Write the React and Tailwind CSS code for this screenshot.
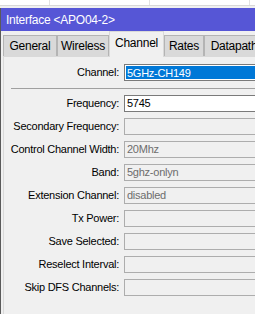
const font = { fontFamily: '"Liberation Sans", Arial, sans-serif' };

const tabs = [
  { name: 'General', w: 'w-[54px]' },
  { name: 'Wireless', w: 'w-[52px]' },
  { name: 'Channel', w: 'w-[55px]', active: true },
  { name: 'Rates', w: 'w-[40px]' },
  { name: 'Datapath', w: 'w-[60px]' },
];

const rows = [
  { label: 'Frequency:', value: '5745', enabled: true },
  { label: 'Secondary Frequency:' },
  { label: 'Control Channel Width:', value: '20Mhz' },
  { label: 'Band:', value: '5ghz-onlyn' },
  { label: 'Extension Channel:', value: 'disabled' },
  { label: 'Tx Power:' },
  { label: 'Save Selected:' },
  { label: 'Reselect Interval:' },
  { label: 'Skip DFS Channels:' },
];

function Row({ label, children }) {
  return (
    <div className="flex h-[17px] items-center">
      <div className="w-[115px] shrink-0 whitespace-nowrap text-right text-black">{label}</div>
      <div className="ml-[5px] h-[17px] w-[140px] shrink-0">{children}</div>
    </div>
  );
}

export default function App() {
  return (
    <div
      className="flex h-[314px] w-[255px] flex-col overflow-hidden bg-white text-[11px] tracking-[-0.25px]"
      style={font}
    >
      {/* table behind the window */}
      <div className="flex h-[6px] shrink-0 border-b border-[#d8d8d8] bg-white">
        <div className="w-[50px] shrink-0 border-r border-[#e2e2e2]" />
        <div className="w-[100px] shrink-0 border-r border-[#e2e2e2]" />
        <div className="w-[100px] shrink-0 border-r border-[#e2e2e2]" />
      </div>
      <div className="h-[2px] shrink-0 bg-[#f0f0f0]" />

      <div className="flex flex-1 flex-col border-l border-[#5a5a5a]">
        <div className="flex h-[23px] shrink-0 items-center bg-[#5656d6] pl-[5px] text-[12px] leading-none text-white">
          Interface &lt;APO04-2&gt;
        </div>

        <div className="flex flex-1 flex-col bg-[#f0f0f0] pl-[2px]">
          <div className="relative z-10 flex h-[25px] shrink-0 items-end">
            {tabs.map((t) =>
              t.active ? (
                <div
                  key={t.name}
                  className={`${t.w} -mb-px flex h-[26px] shrink-0 items-center justify-center border-x border-t border-[#d9d9d9] bg-[#f0f0f0] pb-[3px] text-[12px] text-black`}
                >
                  {t.name}
                </div>
              ) : (
                <div
                  key={t.name}
                  className={`${t.w} flex h-[21px] shrink-0 items-center justify-center border-x border-t border-[#b4b4b4] bg-[#d9d9d9] text-[12px] text-black`}
                >
                  {t.name}
                </div>
              )
            )}
          </div>

          <div className="flex-1 border-l border-t border-[#d9d9d9] pt-[7px]">
            <Row label="Channel:">
              <div className="h-full border border-[#7a7a7a] bg-white p-px">
                <div className="h-full bg-[#0078d7] pl-px leading-[15px] text-white">5GHz-CH149</div>
              </div>
            </Row>

            <div className="ml-[7px] mt-[7px] h-px bg-[#a0a0a0]" />

            <div className="mt-[6px] flex flex-col gap-[6px]">
              {rows.map((r) => (
                <Row key={r.label} label={r.label}>
                  <div
                    className={`h-full border pl-[2px] leading-[15px] ${
                      r.enabled
                        ? 'border-[#7a7a7a] bg-white text-black'
                        : 'border-[#adadad] bg-[#f0f0f0] text-[#6d6d6d]'
                    }`}
                  >
                    {r.value}
                  </div>
                </Row>
              ))}
            </div>
          </div>
        </div>
      </div>
    </div>
  );
}
